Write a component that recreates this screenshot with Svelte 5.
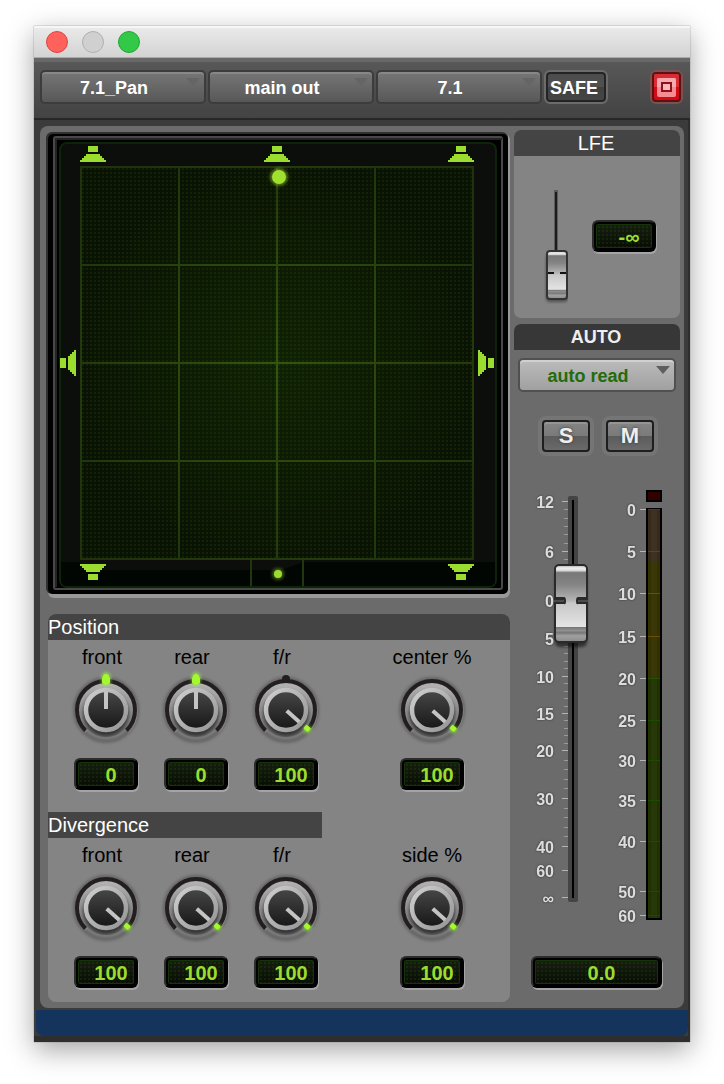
<script lang="ts">
  // Surround panner output window: XY scope, position / divergence knobs, LFE send and main fader

  let track = $state('7.1_Pan');
  let output = $state('main out');
  let format = $state('7.1');
  let automation = $state('auto read');
  let volume = $state(0);
  let lfe = $state(0);

  let position = $state([
    { id: 'pos-front', label: 'front', value: 0, min: -100, dot: true },
    { id: 'pos-rear', label: 'rear', value: 0, min: -100, dot: true },
    { id: 'pos-fr', label: 'f/r', value: 100, min: -100, dot: true },
    { id: 'pos-center', label: 'center %', value: 100, min: 0, dot: false }
  ]);

  let divergence = $state([
    { id: 'div-front', label: 'front', value: 100, min: 0, dot: false },
    { id: 'div-rear', label: 'rear', value: 100, min: 0, dot: false },
    { id: 'div-fr', label: 'f/r', value: 100, min: 0, dot: false },
    { id: 'div-side', label: 'side %', value: 100, min: 0, dot: false }
  ]);

  // fader law: y on the strip drawing, db value, number of minor steps to the next mark
  const faderMarks = [
    { y: 15, db: 12, text: '12', steps: 6 },
    { y: 65, db: 6, text: '6', steps: 6 },
    { y: 114, db: 0, text: '0', steps: 5 },
    { y: 152, db: -5, text: '5', steps: 5 },
    { y: 190, db: -10, text: '10', steps: 5 },
    { y: 227, db: -15, text: '15', steps: 5 },
    { y: 264, db: -20, text: '20', steps: 5 },
    { y: 312, db: -30, text: '30', steps: 5 },
    { y: 360, db: -40, text: '40', steps: 1 },
    { y: 384, db: -60, text: '60', steps: 1 },
    { y: 411, db: -90, text: '∞', steps: 1 }
  ];

  const meterMarks = [
    { y: 23, text: '0', color: '#4a3a22' },
    { y: 65, text: '5', color: '#6a3a1c' },
    { y: 107, text: '10', color: '#6a5000' },
    { y: 150, text: '15', color: '#6a5000' },
    { y: 192, text: '20', color: '#1c5400' },
    { y: 234, text: '25', color: '#1c4a00' },
    { y: 274, text: '30', color: '#1c4a00' },
    { y: 314, text: '35', color: '#1c4a00' },
    { y: 355, text: '40', color: '#1c4a00' },
    { y: 405, text: '50', color: '#1c4a00' },
    { y: 429, text: '60', color: '#1c4a00' }
  ];

  const minorTicks = faderMarks.slice(0, -1).flatMap((m, i) => {
    const next = faderMarks[i + 1].y;
    return Array.from({ length: m.steps - 1 }, (_, k) => Math.round(m.y + ((next - m.y) * (k + 1)) / m.steps));
  });

  function dbToY(db: number) {
    for (let i = 1; i < faderMarks.length; i++) {
      const a = faderMarks[i - 1];
      const b = faderMarks[i];
      if (db >= b.db) return a.y + ((a.db - db) / (a.db - b.db)) * (b.y - a.y);
    }
    return 411;
  }

  // 0 is straight up, end stops sit at 132 degrees either side
  function angle(k: { value: number; min: number }) {
    return -132 + ((k.value - k.min) / (100 - k.min)) * 264;
  }

  const gridLines = [0, 98, 196, 294, 392];

  const speakers = [
    { x: 47, y: 14, r: 0 },
    { x: 231, y: 14, r: 0 },
    { x: 415, y: 14, r: 0 },
    { x: 22, y: 223, r: -90 },
    { x: 440, y: 223, r: 90 },
    { x: 47, y: 432, r: 180 },
    { x: 415, y: 432, r: 180 }
  ];
</script>

{#snippet picker(id: string, label: string, value: string)}
  <div class="picker">
    <select {id} aria-label={label}>
      <option>{value}</option>
    </select>
    <svg class="arrow" width="14" height="8" viewBox="0 0 14 8" aria-hidden="true"><path d="M0 0H14L7 8Z" /></svg>
  </div>
{/snippet}

{#snippet knobs(list: typeof position)}
  <div class="knobs">
    {#each list as k (k.id)}
      <div class="knob">
        <label for={k.id}>{k.label}</label>
        <div class="dial">
          <svg width="72" height="72" viewBox="0 0 72 72" aria-hidden="true">
            <circle cx="36" cy="36" r="31" fill="none" stroke="#000" stroke-opacity=".25" stroke-width="4" filter="url(#soft)" />
            <circle cx="36" cy="36" r="27" fill="url(#dish)" />
            <path d="M15.5 56.5A29 29 0 1 1 56.5 56.5" transform="translate(1 1)" fill="none" stroke="#aaa" stroke-opacity=".3" stroke-width="4" />
            <path d="M15.5 56.5A29 29 0 1 1 56.5 56.5" fill="none" stroke="#231f20" stroke-width="4" />
            <circle cx="36" cy="39" r="23" fill="#000" fill-opacity=".5" filter="url(#soft)" />
            <circle cx="36" cy="36" r="20" fill="url(#cap)" stroke="url(#ring)" stroke-width="4.5" />
            <path d="M36 35V18" transform="rotate({angle(k)} 36 36)" stroke="#c4c4c4" stroke-width="4" />
            {#if k.dot && k.value !== 0}
              <path d="M32 8V5a4 4 0 0 1 8 0V8Z" fill="#231f20" />
            {/if}
            {#if k.value === 0 && k.dot}
              <ellipse cx="36" cy="5" rx="5" ry="7" fill="#9f3" fill-opacity=".6" filter="url(#soft)" />
              <path d="M32 9V5Q33 0 36 0T40 5V9Q36 12 32 9Z" fill="#a4f82e" />
            {:else}
              <g transform="rotate({angle(k)} 36 36)">
                <circle cx="36" cy="7" r="4" fill="#9f3" fill-opacity=".5" filter="url(#soft)" />
                <rect x="33" y="5" width="5" height="6" rx="1" fill="#a4f82e" />
              </g>
            {/if}
          </svg>
          <input id={k.id} class="ghost" type="range" min={k.min} max="100" bind:value={k.value} />
        </div>
        <input class="readout" type="text" aria-label="{k.label} value" bind:value={k.value} />
      </div>
    {/each}
  </div>
{/snippet}

<!-- gradients and filters shared by knobs and faders -->
<svg class="defs" width="0" height="0" aria-hidden="true">
  <defs>
    <filter id="soft" x="-50%" y="-50%" width="200%" height="200%"><feGaussianBlur stdDeviation="1.6" /></filter>
    <linearGradient id="dish" x1="0" y1="0" x2="0" y2="1">
      <stop offset="0" stop-color="#b4b4b4" /><stop offset=".5" stop-color="#8c8c8c" /><stop offset="1" stop-color="#666" />
    </linearGradient>
    <linearGradient id="ring" x1="0" y1="0" x2="1" y2="1">
      <stop offset="0" stop-color="#cfcfcf" /><stop offset="1" stop-color="#959595" />
    </linearGradient>
    <linearGradient id="cap" x1="0" y1="0" x2="0" y2="1">
      <stop offset="0" stop-color="#484848" /><stop offset="1" stop-color="#161616" />
    </linearGradient>
    <linearGradient id="metal" x1="0" y1="0" x2="0" y2="1">
      <stop offset="0" stop-color="#aaa" /><stop offset=".04" stop-color="#eee" /><stop offset=".07" stop-color="#ddd" />
      <stop offset=".1" stop-color="#777" /><stop offset=".25" stop-color="#848484" /><stop offset=".46" stop-color="#b4b4b4" />
      <stop offset=".5" stop-color="#c8c8c8" /><stop offset=".8" stop-color="#e4e4e4" /><stop offset=".81" stop-color="#777" />
      <stop offset=".85" stop-color="#909090" /><stop offset=".88" stop-color="#777" /><stop offset=".92" stop-color="#a0a0a0" />
      <stop offset="1" stop-color="#8a8a8a" />
    </linearGradient>
  </defs>
</svg>

<main class="window">
  <header class="titlebar">
    <button class="light close" aria-label="Close"></button>
    <button class="light idle" aria-label="Minimize"></button>
    <button class="light zoom" aria-label="Zoom"></button>
  </header>

  <div class="toolbar">
    {@render picker('track', 'Track', track)}
    {@render picker('output', 'Output', output)}
    {@render picker('format', 'Format', format)}
    <button class="safe">SAFE</button>
    <button class="target" aria-label="Target">
      <svg width="33" height="34" viewBox="0 0 33 34" aria-hidden="true">
        <rect x="1" y="1" width="31" height="32" rx="5" fill="none" stroke="#805050" stroke-width="2" />
        <rect x="3" y="3" width="27" height="28" rx="3" fill="#d20a14" stroke="#5c1212" stroke-width="2" />
        <path d="M4 4H29V17H4Z" fill="#fff" fill-opacity=".14" />
        <rect x="7" y="8" width="19" height="19" rx="2" fill="#f58c94" />
        <path d="M7 8H26V17H7Z" fill="#fff" fill-opacity=".25" />
        <rect x="12" y="13" width="9" height="8" fill="#ffb6ba" stroke="#8a1218" stroke-width="2" />
      </svg>
    </button>
  </div>

  <div class="body">
    <div class="panel">
      <div class="left">
        <svg class="scope" viewBox="0 0 464 466" role="img" aria-label="Surround position">
          <defs>
            <pattern id="dots" width="4" height="4" patternUnits="userSpaceOnUse">
              <rect width="2" height="2" fill="#4a6a10" fill-opacity=".16" />
            </pattern>
            <radialGradient id="glass"><stop offset="0" stop-color="#0f2204" /><stop offset="1" stop-color="#091303" /></radialGradient>
            <radialGradient id="lines" gradientUnits="userSpaceOnUse" cx="231" cy="231" r="240">
              <stop offset="0" stop-color="#34560e" /><stop offset="1" stop-color="#20330c" />
            </radialGradient>
          </defs>
          <rect x="2" y="2" width="462" height="464" rx="6" fill="#989898" />
          <rect width="462" height="462" rx="6" fill="#303030" />
          <rect x="2" y="2" width="460" height="460" rx="5" fill="#000" />
          <rect x="8" y="5" width="448" height="452" rx="2" fill="none" stroke="#484848" stroke-width="2" />
          <path d="M10 455V7H456" fill="none" stroke="#242424" stroke-width="2" />
          <rect x="14" y="11" width="436" height="444" rx="7" fill="#0b0e0b" stroke="#0c2408" stroke-width="2" />
          <path d="M15 430H34V438H235L258 430H449V448Q449 454 443 454H21Q15 454 15 448Z" fill="#020602" />
          <rect x="34" y="34" width="394" height="394" fill="url(#glass)" />
          <rect x="34" y="34" width="394" height="394" fill="url(#dots)" />
          {#each gridLines as g}
            <rect x={34 + g} y="34" width="2" height="394" fill="url(#lines)" />
            <rect x="34" y={34 + g} width="394" height="2" fill="url(#lines)" />
          {/each}
          <path d="M205 428V454M257 428V454" stroke="#22360f" stroke-width="2" />
          {#each speakers as s}
            <g transform="translate({s.x} {s.y}) rotate({s.r} 0 8)" fill="#9bdd2e" shape-rendering="crispEdges">
              <path d="M-5 0H5V6H-5Z" />
              <path d="M-7 8H7V10H9V12H11V14H13V16H-13V14H-11V12H-9V10H-7Z" />
            </g>
          {/each}
          <circle cx="233" cy="45" r="9" fill="#9bdd2e" fill-opacity=".5" filter="url(#soft)" />
          <circle cx="233" cy="45" r="7" fill="#a0e02f" />
          <circle cx="232" cy="442" r="6" fill="#9bdd2e" fill-opacity=".4" filter="url(#soft)" />
          <circle cx="232" cy="442" r="4" fill="#9bdd2e" />
        </svg>

        <section class="controls">
          <h2>Position</h2>
          {@render knobs(position)}
          <h2 class="short">Divergence</h2>
          {@render knobs(divergence)}
        </section>
      </div>

      <div class="right">
        <section class="lfe">
          <h2>LFE</h2>
          <div class="send">
            <div class="slider">
              <svg width="24" height="116" viewBox="0 0 24 116" aria-hidden="true">
                <path d="M12 2V72" stroke="#5c5c5c" stroke-width="4" />
                <path d="M12 4V72" stroke="#1c1c1c" stroke-width="2" />
                <g transform="translate(0 {-lfe / 2})">
                  <rect x="2" y="66" width="22" height="48" rx="4" fill="#000" fill-opacity=".4" filter="url(#soft)" />
                  <rect x="3" y="63" width="20" height="48" rx="3" fill="url(#metal)" stroke="#333" stroke-width="2" />
                  <path d="M4 85H10M16 85H22" stroke="#111" stroke-width="2" />
                </g>
              </svg>
              <input class="ghost" type="range" aria-label="LFE level" min="0" max="100" bind:value={lfe} />
            </div>
            <input class="readout" type="text" aria-label="LFE value" value="-∞" />
          </div>
        </section>

        <section class="auto">
          <h2>AUTO</h2>
          {@render picker('automation', 'Automation mode', automation)}
        </section>

        <div class="switches">
          <button>S</button>
          <button>M</button>
        </div>

        <div class="strip">
          <svg viewBox="0 0 166 440" aria-hidden="true">
            {#each minorTicks as y}
              <rect x="50" {y} width="4" height="1" fill="#999" />
            {/each}
            {#each faderMarks as m}
              <rect x="48" y={m.y} width="6" height="1" fill="#b4b4b4" />
              <text x="40" y={m.y + 7}>{m.text}</text>
            {/each}
            <rect x="54" y="10" width="10" height="406" rx="2" fill="#444" />
            <rect x="58" y="14" width="2" height="398" fill="#000" />

            <g transform="translate(40 {dbToY(volume) - 36})">
              <rect x="1" y="5" width="32" height="78" rx="5" fill="#000" fill-opacity=".55" filter="url(#soft)" />
              <rect x="1" y="1" width="32" height="77" rx="4" fill="url(#metal)" stroke="#2a2a2a" stroke-width="2" />
              <path d="M0 33H10Q12 33 12 37T10 40H0ZM34 33H24Q22 33 22 37T24 40H34Z" fill="#2a2a2a" />
              <path d="M0 37H10M24 37H34" stroke="#4c4c4c" stroke-width="2" />
            </g>

            <rect x="132" y="4" width="16" height="12" fill="#000" />
            <rect x="134" y="6" width="12" height="8" fill="#300" />
            <rect x="132" y="22" width="16" height="412" fill="#000" />
            <rect x="134" y="24" width="12" height="51" fill="#362b1b" />
            <rect x="134" y="75" width="12" height="117" fill="#333100" />
            <rect x="134" y="192" width="12" height="240" fill="#203200" />
            <path d="M140 24V432" stroke="#fff" stroke-opacity=".03" stroke-width="6" />
            {#each meterMarks as m}
              <rect x="126" y={m.y} width="6" height="1" fill="#b4b4b4" />
              <rect x="134" y={m.y} width="12" height="1" fill={m.color} />
              <text x="122" y={m.y + 7}>{m.text}</text>
            {/each}
          </svg>
          <input class="ghost" type="range" aria-label="Volume" min="-90" max="12" step="0.1" bind:value={volume} />
        </div>

        <input class="readout wide" type="text" aria-label="Volume value" value={volume.toFixed(1)} />
      </div>
    </div>
    <footer></footer>
  </div>
</main>

<style>
  :global(body) {
    margin: 0;
    background: #fff;
    overflow-x: hidden;
  }

  .defs {
    position: absolute;
  }

  .window {
    margin: 26px 34px 42px;
    font-family: "Liberation Sans", Arial, sans-serif;
    background: #3b3b3b;
    box-shadow: 0 0 1px #666, 0 8px 26px rgba(0, 0, 0, 0.36);
  }

  button,
  select,
  input {
    font-family: inherit;
    margin: 0;
    box-sizing: border-box;
  }

  h2 {
    margin: 0;
    height: 26px;
    line-height: 26px;
    font-size: 20px;
    font-weight: 400;
    color: #fff;
    background: #444;
  }

  .titlebar {
    display: flex;
    align-items: center;
    gap: 14px;
    height: 32px;
    padding: 0 12px;
    box-sizing: border-box;
    background: linear-gradient(#ebebeb, #d2d2d2);
    box-shadow: inset 0 2px #f6f6f6, inset 0 -1px #aaa;
  }
  .light {
    width: 22px;
    height: 22px;
    padding: 0;
    border-radius: 50%;
    border: 1px solid;
  }
  .close { background: #ff615c; border-color: #e0443e; }
  .idle { background: #d0d0d0; border-color: #b0b0b0; }
  .zoom { background: #33c948; border-color: #1fa82f; }

  .toolbar {
    display: flex;
    gap: 2px;
    height: 62px;
    padding: 12px 7px 0 6px;
    box-sizing: border-box;
    background: linear-gradient(#595959, #434343);
    border-bottom: 2px solid #272727;
    box-shadow: inset 0 4px #686868;
  }
  .toolbar .arrow {
    fill: #656565;
  }
  .picker {
    position: relative;
    flex: 1;
    height: 34px;
  }
  .picker select {
    appearance: none;
    width: 100%;
    height: 34px;
    padding: 2px 18px 0 0;
    border: 2px solid #3c3c3c;
    border-radius: 5px;
    background: linear-gradient(#767676, #585858);
    box-shadow: inset 0 2px #888;
    color: #fff;
    font-size: 18px;
    font-weight: 700;
    text-align: center;
    text-align-last: center;
  }
  .arrow {
    position: absolute;
    right: 6px;
    top: 8px;
    fill: #5e5e5e;
    pointer-events: none;
  }
  .safe {
    width: 64px;
    height: 34px;
    padding: 2px 4px 0 0;
    border: 2px solid #6c6c6c;
    border-radius: 6px;
    background: linear-gradient(#4c4c4c, #505050 50%, #404040 50%, #464646);
    box-shadow: inset 0 0 0 2px #242424;
    color: #fff;
    font-size: 18px;
    font-weight: 700;
  }
  .target {
    height: 34px;
    margin-left: 40px;
    padding: 0;
    border: 0;
    background: none;
  }
  .target svg {
    display: block;
  }

  .body {
    padding: 6px;
    background: #3b3b3b;
    box-shadow: inset -2px 0 #2e2e2e, inset 0 -6px #2e2e2e;
  }
  .panel {
    display: grid;
    grid-template-columns: minmax(0, 1fr) 166px;
    gap: 4px;
    padding: 4px 4px 6px 6px;
    border-radius: 8px;
    background: #6b6b6b;
  }
  footer {
    height: 26px;
    margin: 2px -4px 0;
    border-radius: 0 0 8px 8px;
    background: #14345d;
  }

  .scope {
    display: block;
    width: 100%;
    margin-top: 2px;
  }

  .controls {
    margin: 16px 0 0 2px;
    padding-bottom: 14px;
    border-radius: 8px;
    overflow: hidden;
    background: #848484;
  }
  .controls .short {
    width: 274px;
    margin-top: 22px;
  }
  .knobs {
    display: grid;
    grid-template-columns: repeat(3, 90px) 146px;
    padding: 4px 0 0 13px;
  }
  .knob {
    display: flex;
    flex-direction: column;
    align-items: center;
  }
  .knob:last-child {
    padding-left: 56px;
  }
  .knob label {
    padding-right: 8px;
    font-size: 20px;
    line-height: 26px;
    color: #000;
  }
  .knob:last-child label {
    padding-right: 0;
  }
  .dial {
    position: relative;
    width: 72px;
    height: 72px;
    margin: 4px 0 12px;
  }
  .dial svg {
    display: block;
    overflow: visible;
  }
  .ghost {
    position: absolute;
    inset: 0;
    width: 100%;
    height: 100%;
    opacity: 0;
  }

  .readout {
    width: 64px;
    height: 32px;
    padding: 2px 0 0 10px;
    border: 2px solid #000;
    border-top-color: #2c2c2c;
    border-left-color: #2c2c2c;
    border-radius: 6px;
    background:
      radial-gradient(circle at 1px 1px, rgba(90, 150, 30, 0.12) 1px, transparent 1px) 0 0 / 4px 4px,
      linear-gradient(#171f11, #070c04);
    box-shadow: inset 0 0 0 2px #000, inset 0 0 0 3px #17330c, 1px 2px #a4a4a4;
    color: #9bdd2e;
    font-size: 20px;
    font-weight: 700;
    text-align: center;
  }

  .right {
    display: flex;
    flex-direction: column;
  }
  .right h2 {
    text-align: center;
    padding-right: 2px;
    border-radius: 7px 7px 0 0;
  }
  .lfe {
    height: 188px;
    border-radius: 7px;
    background: #848484;
  }
  .send {
    display: flex;
    align-items: flex-start;
    gap: 24px;
    padding: 32px 0 0 30px;
  }
  .send .readout {
    margin-top: 32px;
  }
  .slider {
    position: relative;
  }
  .slider svg {
    display: block;
  }

  .auto {
    margin-top: 6px;
  }
  .auto h2 {
    background: #373737;
    font-size: 18px;
    font-weight: 700;
    color: #eee;
  }
  .auto .picker {
    margin: 8px 4px 0;
  }
  .auto select {
    border-color: #505050;
    background: linear-gradient(#bcbcbc, #a0a0a0);
    box-shadow: inset 0 2px #d0d0d0;
    color: #246b0c;
  }

  .switches {
    display: flex;
    justify-content: center;
    gap: 16px;
    margin: 28px 0 34px;
    padding-left: 2px;
  }
  .switches button {
    width: 48px;
    height: 32px;
    padding: 0;
    border: 2px solid #1e1e1e;
    border-radius: 4px;
    background: linear-gradient(#858585, #7a7a7a 50%, #5c5c5c 50%, #6a6a6a);
    box-shadow: inset 0 2px #959595, 0 0 0 4px #757575;
    color: #eee;
    font-size: 22px;
    font-weight: 700;
    text-shadow: 0 0 3px #333;
  }

  .strip {
    position: relative;
  }
  .strip svg {
    display: block;
    width: 100%;
  }
  .strip text {
    font-family: "Liberation Sans Narrow", "Liberation Sans", Arial, sans-serif;
    font-size: 16px;
    font-weight: 700;
    text-anchor: end;
    fill: #ddd;
    filter: drop-shadow(0 0 1px #333);
  }
  .strip .ghost {
    left: 40px;
    width: 34px;
    writing-mode: vertical-lr;
    direction: rtl;
  }
  .wide {
    width: auto;
    margin: 30px 18px 0 17px;
  }
</style>
